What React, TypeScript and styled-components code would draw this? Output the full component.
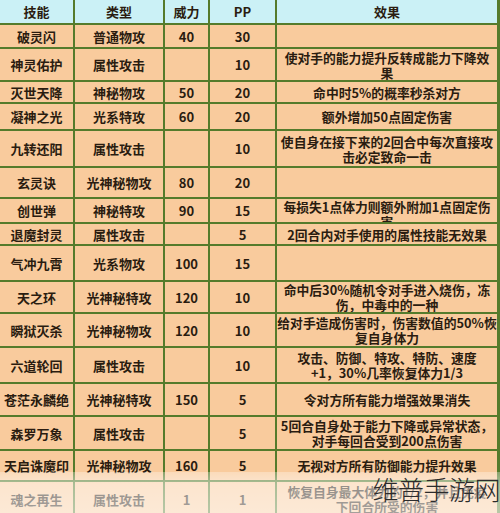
import styled, { createGlobalStyle } from 'styled-components'

interface Skill {
  name: string
  kind: string
  power: string
  pp: string
  effect: string[]
  h: number
}

const skills: Skill[] = [
  { name: '破灵闪', kind: '普通物攻', power: '40', pp: '30', effect: [], h: 22 },
  { name: '神灵佑护', kind: '属性攻击', power: '', pp: '10', effect: ['使对手的能力提升反转成能力下降效', '果'], h: 31 },
  { name: '灭世天降', kind: '神秘物攻', power: '50', pp: '20', effect: ['命中时5%的概率秒杀对方'], h: 20 },
  { name: '凝神之光', kind: '光系特攻', power: '60', pp: '20', effect: ['额外增加50点固定伤害'], h: 25 },
  { name: '九转还阳', kind: '属性攻击', power: '', pp: '10', effect: ['使自身在接下来的2回合中每次直接攻', '击必定致命一击'], h: 35 },
  { name: '玄灵诀', kind: '光神秘物攻', power: '80', pp: '20', effect: [], h: 29 },
  { name: '创世弹', kind: '神秘特攻', power: '90', pp: '15', effect: ['每损失1点体力则额外附加1点固定伤', '害'], h: 23 },
  { name: '退魔封灵', kind: '属性攻击', power: '', pp: '5', effect: ['2回合内对手使用的属性技能无效果'], h: 20 },
  { name: '气冲九霄', kind: '光系物攻', power: '100', pp: '15', effect: [], h: 34 },
  { name: '天之环', kind: '光神秘特攻', power: '120', pp: '10', effect: ['命中后30%随机令对手进入烧伤，冻', '伤，中毒中的一种'], h: 30 },
  { name: '瞬狱灭杀', kind: '光神秘物攻', power: '120', pp: '10', effect: ['给对手造成伤害时，伤害数值的50%恢', '复自身体力'], h: 32 },
  { name: '六道轮回', kind: '属性攻击', power: '', pp: '10', effect: ['攻击、防御、特攻、特防、速度', '+1，30%几率恢复体力1/3'], h: 34 },
  { name: '苍茫永麟绝', kind: '光神秘特攻', power: '150', pp: '5', effect: ['令对方所有能力增强效果消失'], h: 31 },
  { name: '森罗万象', kind: '属性攻击', power: '', pp: '5', effect: ['5回合自身处于能力下降或异常状态，', '对手每回合受到200点伤害'], h: 32 },
  { name: '天启诛魔印', kind: '光神秘物攻', power: '160', pp: '5', effect: ['无视对方所有防御能力提升效果'], h: 29 },
  { name: '魂之再生', kind: '属性攻击', power: '1', pp: '1', effect: ['恢复自身最大体力的1/2，并且免疫', '下回合所受的伤害'], h: 34 },
]

function App() {
  return (
    <>
      <GlobalStyle />
      <Page>
        <Table>
          <HeaderRow>
            <HeadCell>技能</HeadCell>
            <HeadCell>类型</HeadCell>
            <HeadCell>威力</HeadCell>
            <HeadCell>PP</HeadCell>
            <HeadCell>效果</HeadCell>
          </HeaderRow>
          {skills.map((s) => (
            <Row key={s.name} $h={s.h}>
              <Cell>{s.name}</Cell>
              <Cell>{s.kind}</Cell>
              <Cell>{s.power}</Cell>
              <Cell>{s.pp}</Cell>
              <EffectCell>
                {s.effect.map((line, i) => (
                  <EffectLine key={i}>{line}</EffectLine>
                ))}
              </EffectCell>
            </Row>
          ))}
        </Table>
        <Fade />
        <Watermark>维普手游网</Watermark>
      </Page>
    </>
  )
}

const GlobalStyle = createGlobalStyle`
  html, body {
    margin: 0;
    padding: 0;
    background: #ffffff;
  }
  body {
    font-family: "Noto Sans CJK SC", "Noto Sans", sans-serif;
  }
`

const Page = styled.div`
  position: relative;
  width: 500px;
  height: 513px;
  overflow: hidden;
`

const Table = styled.div`
  display: flex;
  flex-direction: column;
  gap: 2px;
  width: 499px;
  padding-right: 2px;
  background: #557b2c;
`

const columns = '73px 88px 43px 65px 220px'

const HeaderRow = styled.div`
  display: grid;
  grid-template-columns: ${columns};
  column-gap: 2px;
  height: 23px;
`

const Row = styled.div<{ $h: number }>`
  display: grid;
  grid-template-columns: ${columns};
  column-gap: 2px;
  height: ${(p) => p.$h}px;
`

const HeadCell = styled.div`
  display: flex;
  align-items: center;
  justify-content: center;
  background: #cbf1f6;
  color: #2a1c10;
  font-size: 13px;
  font-weight: 700;
`

const Cell = styled.div`
  display: flex;
  align-items: center;
  justify-content: center;
  background: #f9cb9d;
  color: #2a1c10;
  font-size: 13px;
  font-weight: 700;
  white-space: nowrap;
  overflow: hidden;
`

const EffectCell = styled.div`
  display: flex;
  flex-direction: column;
  align-items: center;
  justify-content: safe center;
  background: #f9cb9d;
  color: #2a1c10;
  font-size: 12.8px;
  font-weight: 700;
  line-height: 15px;
  overflow: hidden;
`

const EffectLine = styled.div`
  white-space: nowrap;
`

const Fade = styled.div`
  position: absolute;
  left: 0;
  right: 0;
  top: 472px;
  bottom: 0;
  background: linear-gradient(
    to bottom,
    rgba(255, 255, 255, 0.3) 0px,
    rgba(255, 255, 255, 0.5) 12px,
    rgba(255, 255, 255, 0.58) 41px
  );
`

const Watermark = styled.div`
  position: absolute;
  right: 0;
  top: 473px;
  font-size: 26px;
  font-weight: 300;
  line-height: 32px;
  color: #2b2b2b;
  letter-spacing: -0.5px;
`

export default App
